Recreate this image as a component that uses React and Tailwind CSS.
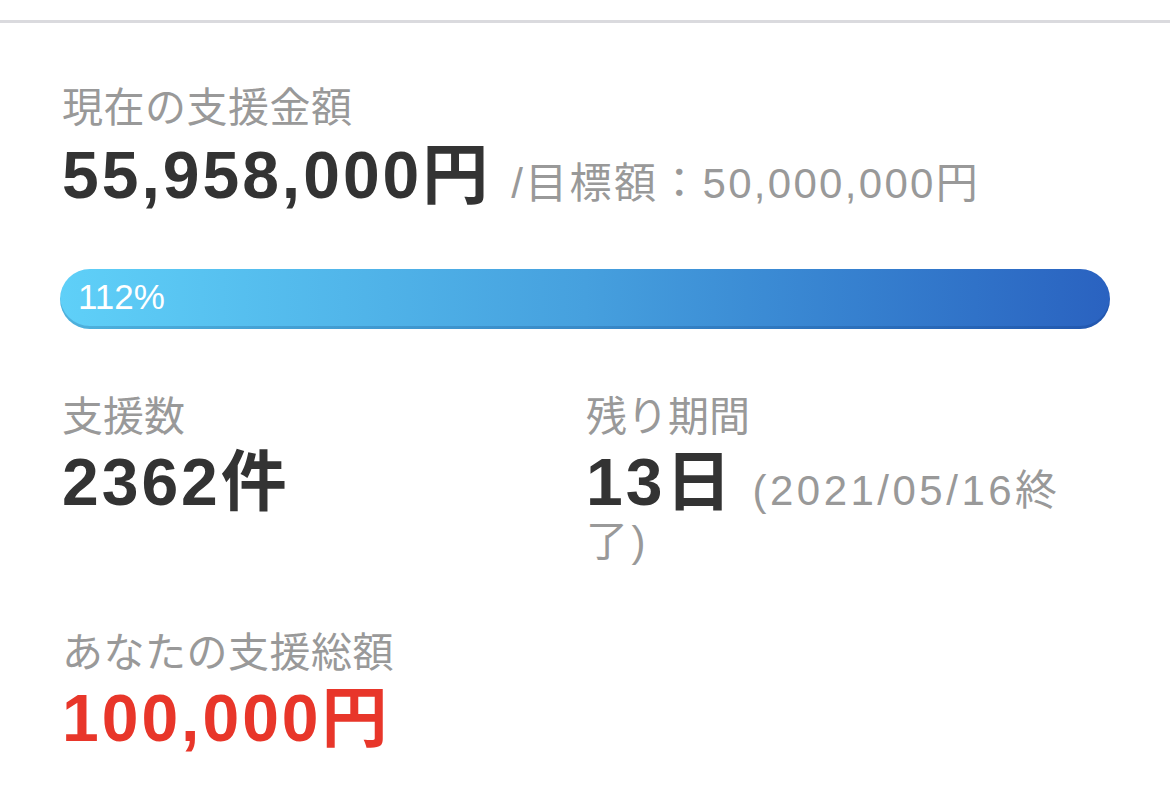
export default function App() {
  const font = { fontFamily: '"Liberation Sans", "Noto Sans CJK JP", sans-serif' };
  return (
    <div className="w-[1170px] h-[803px] bg-white overflow-hidden" style={font}>
      <div className="h-[20px]" />
      <div className="h-[3px] bg-[#dadade]" />
      <div className="px-[62px] pt-[60px]">
        <div className="text-[41px] leading-[50px] text-[#999999] tracking-[0.5px]">現在の支援金額</div>
        <div className="flex items-baseline mt-[6px]">
          <span className="text-[66px] leading-[72px] font-bold text-[#333333] tracking-[3px]">55,958,000円</span>
          <span className="ml-[20px] text-[42px] text-[#999999] tracking-[2.3px]">/目標額：50,000,000円</span>
        </div>
        <div className="mt-[54px] -ml-[2px] w-[1050px] h-[60px] rounded-full bg-gradient-to-r from-[#5fd0f8] via-[#46a0de] to-[#2a62c0] shadow-[inset_0_-3px_0_rgba(0,40,100,0.18)] flex items-center pl-[18px] pb-[3px]">
          <span className="text-[35px] text-white">112%</span>
        </div>
        <div className="grid grid-cols-[524px_500px] mt-[63px]">
          <div>
            <div className="text-[41px] leading-[50px] text-[#999999]">支援数</div>
            <div className="text-[66px] leading-[72px] font-bold text-[#333333] tracking-[3px] mt-[4px]">2362件</div>
          </div>
          <div>
            <div className="text-[41px] leading-[50px] text-[#999999]">残り期間</div>
            <div className="mt-[4px] text-[42px] leading-[48px] text-[#999999] tracking-[3.5px]">
              <span className="text-[66px] leading-[72px] font-bold text-[#333333] tracking-[3px] mr-[18px]">13日</span>
              (2021/05/16終了)
            </div>
          </div>
        </div>
        <div className="mt-[62px] text-[41px] leading-[50px] text-[#999999] tracking-[0.5px]">あなたの支援総額</div>
        <div className="text-[66px] leading-[72px] font-bold text-[#e8362a] tracking-[3px] mt-[4px]">100,000円</div>
      </div>
    </div>
  );
}
